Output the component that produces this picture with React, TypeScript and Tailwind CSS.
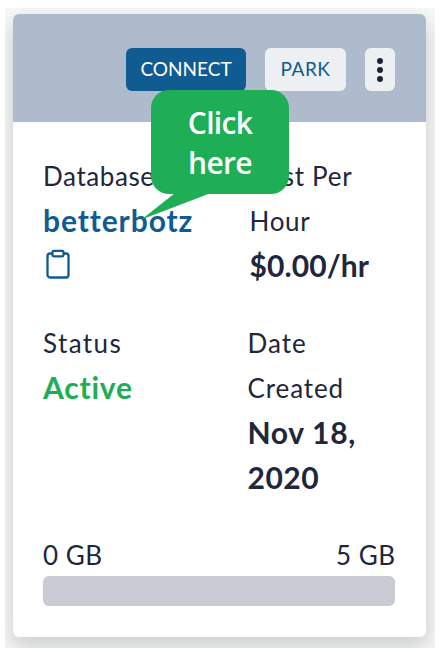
export default function App() {
  return (
    <div className="h-[652px] w-[440px] overflow-hidden bg-white pt-2 pl-[5px] font-['Lato',sans-serif] text-[#20263c]">
      <main className="h-[640px] w-[430px] overflow-hidden bg-[#f5f6f6] pt-[5.5px] pl-[7.5px]">
        <section className="h-[623px] w-[413px] rounded-md bg-white shadow-[0_9px_20px_rgba(0,20,20,0.18)]">
          <header className="flex h-[108px] items-start justify-end gap-[19px] rounded-t-md bg-[#adbbcd] pt-[34px] pr-[30.5px] text-[19px]">
            <button className="h-[43px] w-[120px] rounded-md bg-[#0f5b92] text-white">CONNECT</button>
            <button className="h-[43px] w-[81px] rounded-md bg-[#edf0f3] tracking-[0.5px] text-[#0f5b92]">PARK</button>
            <button aria-label="More options" className="flex h-[43px] w-[30px] flex-col items-center justify-center gap-[3.5px] rounded-md bg-[#edf0f3] pt-0.5">
              <span className="size-[5.5px] rounded-full bg-[#1e2238]" />
              <span className="size-[5.5px] rounded-full bg-[#1e2238]" />
              <span className="size-[5.5px] rounded-full bg-[#1e2238]" />
            </button>
          </header>
          <div className="pr-[30px] pl-[30.5px] pt-[32.5px] text-[26px] leading-[45px]">
            <div className="flex h-[167px]">
              <div className="w-[206.5px]">
                <div className="relative h-[45px] w-max tracking-[0.6px]">
                  Database
                  <div className="absolute top-[-64px] left-[108px] h-[131px] w-[138px] text-center font-['Open_Sans',sans-serif] text-[30px] leading-10 font-semibold tracking-[-0.7px] text-white">
                    <svg className="absolute inset-0 overflow-visible" width="138" height="131" viewBox="0 0 138 131" fill="#1eae55">
                      <rect width="138" height="104" rx="18" />
                      <path d="M24 103L-9.5 129.5L60 103Z" />
                    </svg>
                    <div className="relative pt-[13px]">Click<br />here</div>
                  </div>
                </div>
                <div className="-mt-[1.5px] h-[45px] text-[30px] font-bold tracking-[0.9px] text-[#0f5b92]">betterbotz</div>
                <svg className="mt-[5px] ml-[3px]" width="25" height="31" viewBox="0 0 25 31" fill="none" stroke="#0f5b92" strokeWidth="2.3">
                  <rect x="1.5" y="5.5" width="21" height="24" rx="2.5" />
                  <rect x="6.5" y="2.8" width="11" height="5.5" rx="1.3" fill="white" />
                </svg>
              </div>
              <div>
                <div className="tracking-[0.7px]">Cost Per<br />Hour</div>
                <div className="-mt-[1.5px] text-[30px] font-bold tracking-[0.1px]">$0.00/hr</div>
              </div>
            </div>
            <div className="flex h-[212px]">
              <div className="w-[204.5px]">
                <div className="tracking-[1.4px]">Status</div>
                <div className="-mt-[1.5px] text-[30px] font-bold tracking-[0.8px] text-[#1eae55]">Active</div>
              </div>
              <div>
                <div><span className="tracking-[1px]">Date</span><br /><span className="tracking-[0.9px]">Created</span></div>
                <div className="-mt-[1.5px] text-[30px] font-bold"><span className="tracking-[0.7px]">Nov 18,</span><br /><span className="tracking-[0.5px]">2020</span></div>
              </div>
            </div>
            <div className="flex h-[43px] justify-between tracking-[0.5px]"><span>0 GB</span><span>5 GB</span></div>
            <div className="h-[30px] w-[352px] rounded-md bg-[#c8cad4]" />
          </div>
        </section>
      </main>
    </div>
  );
}
